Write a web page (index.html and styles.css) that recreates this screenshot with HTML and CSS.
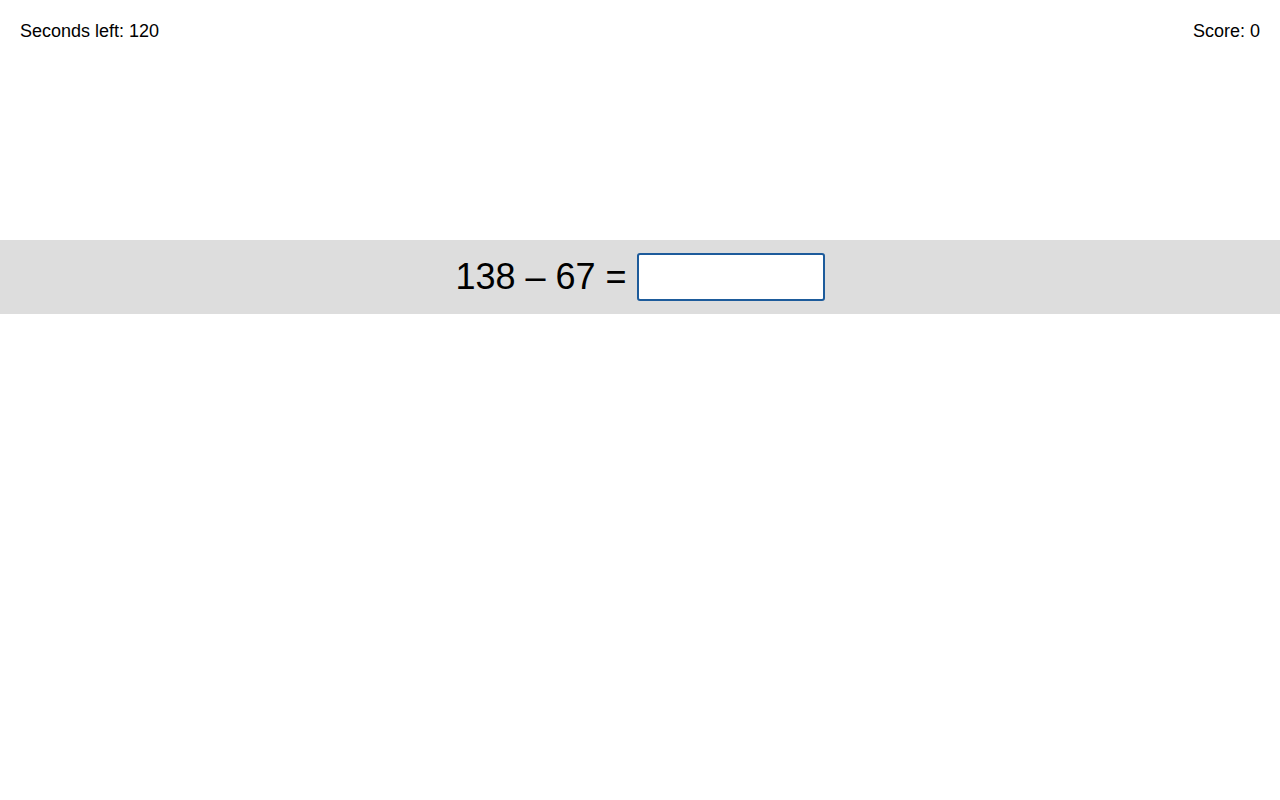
FILE: index.html
```html
<!DOCTYPE html>
<html>
<head>
<meta charset="utf-8">
<link rel="stylesheet" href="styles.css">
</head>
<body>
<div class="topbar">
  <span class="timer">Seconds left: 120</span>
  <span class="score">Score: 0</span>
</div>
<div class="band">
  <span class="problem">138 – 67 =</span>
  <input class="answer" type="text">
</div>
</body>
</html>
```
FILE: styles.css
```css
html, body {
  margin: 0;
  padding: 0;
  background: #ffffff;
}
body {
  font-family: "Liberation Sans", Arial, sans-serif;
  color: #000;
}
.topbar {
  display: flex;
  justify-content: space-between;
  padding: 20px 20px 0 20px;
  font-size: 18px;
  line-height: 22px;
}
.band {
  margin-top: 198px;
  height: 74px;
  background: #dddddd;
  display: flex;
  align-items: center;
  justify-content: center;
  gap: 10px;
}
.problem {
  font-size: 36px;
  line-height: 40px;
}
.answer {
  box-sizing: border-box;
  width: 188px;
  height: 48px;
  border: 2px solid #1d5b9b;
  border-radius: 3px;
  background: #fff;
  outline: none;
  padding: 0 8px;
  font-size: 28px;
  font-family: "Liberation Sans", Arial, sans-serif;
  margin: 0;
}
```
